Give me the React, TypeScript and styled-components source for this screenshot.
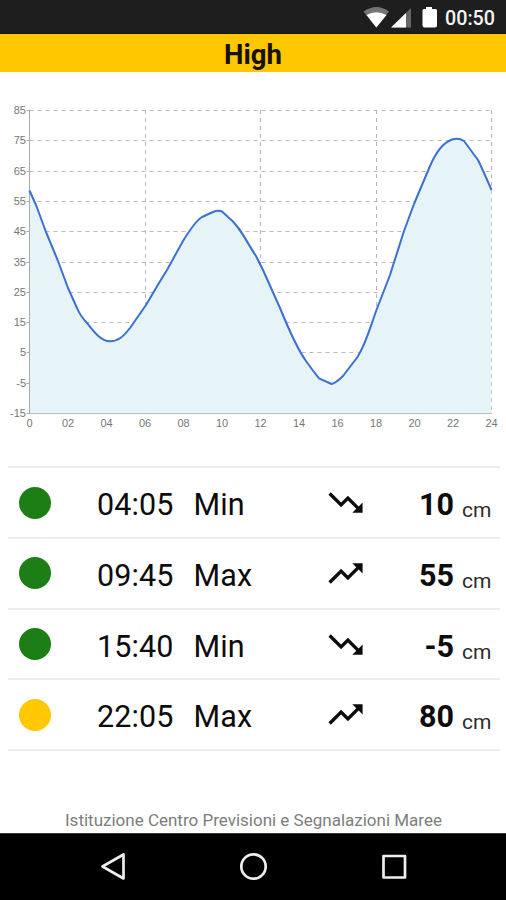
import React from "react";
import styled, { createGlobalStyle } from "styled-components";

const GlobalStyle = createGlobalStyle`
  *, *::before, *::after { box-sizing: border-box; }
  body {
    margin: 0;
    background: #fff;
    font-family: Roboto, "Liberation Sans", sans-serif;
  }
`;

const Screen = styled.div`
  display: flex;
  flex-direction: column;
  width: 506px;
  height: 900px;
  overflow: hidden;
  background: #fff;
  color: #0c0c0c;
`;

const StatusBar = styled.header`
  flex: none;
  display: flex;
  align-items: center;
  justify-content: flex-end;
  height: 34px;
  padding-right: 11px;
  background: #1e1e1e;
  border-bottom: 1px solid #15120a;
`;

const StatusIcons = styled.svg`
  display: block;
  width: 82px;
  height: 33px;
  margin-right: 2px;
`;

const Clock = styled.span`
  font-size: 19.7px;
  line-height: 33px;
  font-weight: 500;
  color: #f4f4f4;
  padding-top: 3px;
`;

const LevelBanner = styled.h1`
  flex: none;
  height: 38px;
  margin: 0;
  background: #fec700;
  color: #151104;
  font-size: 27.5px;
  line-height: 42px;
  font-weight: 700;
  text-align: center;
`;

const Chart = styled.svg`
  flex: none;
  display: block;
  width: 506px;
  height: 394px;
`;

const AxisLabel = styled.text`
  font-family: "Liberation Sans", Arial, sans-serif;
  font-size: 11px;
  fill: #777;
`;

const TideList = styled.ul`
  flex: none;
  list-style: none;
  margin: 0 6px 0 8px;
  padding: 0;
  border-top: 2px solid #ededed;
`;

const TideRow = styled.li`
  display: grid;
  grid-template-columns: 89px 96.5px 130px 52px 78.5px 1fr;
  height: 70.8px;
  border-bottom: 2px solid #ededed;
  font-size: 30.5px;
  line-height: 73px;
`;

const Dot = styled.span<{ $color: string }>`
  width: 32px;
  height: 32px;
  margin: 18.5px 0 0 11px;
  border-radius: 50%;
  background: ${(p) => p.$color};
`;

const Time = styled.span`
  letter-spacing: 0.1px;
`;

const Kind = styled.span`
  letter-spacing: 0.1px;
`;

const Trend = styled.svg`
  display: block;
  width: 41px;
  height: 41px;
  margin: 14px 0 0 1px;
  fill: #0c0c0c;
`;

const Level = styled.strong`
  font-weight: 700;
  text-align: right;
`;

const Unit = styled.span`
  padding: 6px 0 0 8px;
  font-size: 21px;
  color: #2c2c2c;
`;

const Credit = styled.footer`
  flex: 1;
  display: flex;
  align-items: flex-end;
  justify-content: center;
  padding: 0 0 3px 1px;
  font-size: 17px;
  line-height: 20px;
  color: #7d7d7d;
  white-space: nowrap;
`;

const NavBar = styled.nav`
  flex: none;
  display: flex;
  justify-content: space-between;
  height: 67px;
  padding: 18px 97px 0;
  background: #000;
  border-top: 1px solid #333;
`;

const NavIcon = styled.svg`
  display: block;
  width: 32px;
  height: 30px;
  fill: none;
  stroke: #eee;
  stroke-width: 2.7;
  stroke-linejoin: round;
`;

const levels = [85, 75, 65, 55, 45, 35, 25, 15, 5, -5, -15];
const hours = ["0", "02", "04", "06", "08", "10", "12", "14", "16", "18", "20", "22", "24"];
const levelY = (v: number) => Math.round(110 + (85 - v) * 3.03) + 0.5;
const hourX = (h: number) => 29.5 + h * 19.25;

const curve =
  "M29.5 190.5L36 205L46 232L58 261L68 288L77 308Q80 315.500 87 323C94 332 101 341.3 110 341.3C118 341.3 123 337 130 328L146 305L159 283L167 270L183 241C191 228 197 220 202 217L213 212Q218 210 222 211.5L228 217C240 226 247 243 256 256L263 270L280 308C289 330 298 350 306 361Q313 371 319 378.3L331.5 384Q336 383 343 376L357.5 357C367 342 371 324 378 306L390 275L404 231L414 204L430 166C436 152 443 142 453 139.2Q459 137.7 464 141L478 160Q482 168 491.5 190";

const trendUp = "M16 6l2.29 2.29-4.88 4.88-4-4L2 16.59 3.41 18l6-6 4 4 6.3-6.29L22 12V6z";
const trendDown = "M16 18l2.29-2.29-4.88-4.88-4 4L2 7.41 3.41 6l6 6 4-4 6.3 6.29L22 12v6z";

const tides = [
  { time: "04:05", kind: "Min", level: 10, color: "#1d7e16" },
  { time: "09:45", kind: "Max", level: 55, color: "#1d7e16" },
  { time: "15:40", kind: "Min", level: -5, color: "#1d7e16" },
  { time: "22:05", kind: "Max", level: 80, color: "#ffc800" },
];

function TideChart() {
  return (
    <Chart viewBox="0 72 506 394">
      <g stroke="#b8b8b8" strokeDasharray="4 4">
        {levels.map((v) => (
          <path key={v} d={`M29.5 ${levelY(v)}H492`} />
        ))}
        {[6, 12, 18, 24].map((h) => (
          <path key={h} d={`M${Math.round(hourX(h) - 0.5) + 0.5} 110V413`} />
        ))}
      </g>
      <path d={`${curve}V413H29.5Z`} fill="#e7f4f7" />
      <path d="M491.5 190V413" stroke="#c2c2c2" strokeDasharray="4 4" />
      <g stroke="#aaa">
        <path d="M29.5 110V414" />
        <path d="M29 413.5H492" stroke="#bbb" />
        {levels.map((v) => (
          <path key={v} d={`M26.5 ${levelY(v)}H30`} />
        ))}
      </g>
      <path d={curve} fill="none" stroke="#3c70d0" strokeWidth="2" strokeLinejoin="round" />
      {levels.map((v) => (
        <AxisLabel key={v} x="26" y={levelY(v) + 3.5} textAnchor="end">
          {v}
        </AxisLabel>
      ))}
      {hours.map((h, i) => (
        <AxisLabel key={h} x={hourX(i * 2)} y="426.5" textAnchor="middle">
          {h}
        </AxisLabel>
      ))}
    </Chart>
  );
}

export default function App() {
  return (
    <>
      <GlobalStyle />
      <Screen>
        <StatusBar>
          <StatusIcons viewBox="360 0 82 33">
            <path d="M362.500 11.500Q375.500 2.500 388 11.500L375.300 27.500Z" fill="#747474" />
            <path d="M365.500 15Q375.300 9.500 385.500 15L375.300 27.500Z" fill="#fff" />
            <path d="M410 8V27.500H390Z" fill="#666" />
            <path d="M405 13V27.500H390Z" fill="#fff" />
            <path
              d="M425 7h6v2h3.500q1.500 0 1.500 1.500v15q0 2-2 2h-10.500q-2 0-2-2v-15q0-1.500 1.500-1.500h2z"
              fill="#fff"
            />
          </StatusIcons>
          <Clock>00:50</Clock>
        </StatusBar>
        <LevelBanner>High</LevelBanner>
        <TideChart />
        <TideList>
          {tides.map((t) => (
            <TideRow key={t.time}>
              <Dot $color={t.color} />
              <Time>{t.time}</Time>
              <Kind>{t.kind}</Kind>
              <Trend viewBox="0 0 24 24">
                <path d={t.kind === "Max" ? trendUp : trendDown} />
              </Trend>
              <Level>{t.level}</Level>
              <Unit>cm</Unit>
            </TideRow>
          ))}
        </TideList>
        <Credit>Istituzione Centro Previsioni e Segnalazioni Maree</Credit>
        <NavBar>
          <NavIcon viewBox="97 852 32 30">
            <path d="M102.500 866.500L123.500 854.500V878.500Z" />
          </NavIcon>
          <NavIcon viewBox="237 852 32 30">
            <circle cx="253.500" cy="866.500" r="12.200" />
          </NavIcon>
          <NavIcon viewBox="377 852 32 30">
            <rect x="383.500" y="856" width="21.500" height="21.500" />
          </NavIcon>
        </NavBar>
      </Screen>
    </>
  );
}
